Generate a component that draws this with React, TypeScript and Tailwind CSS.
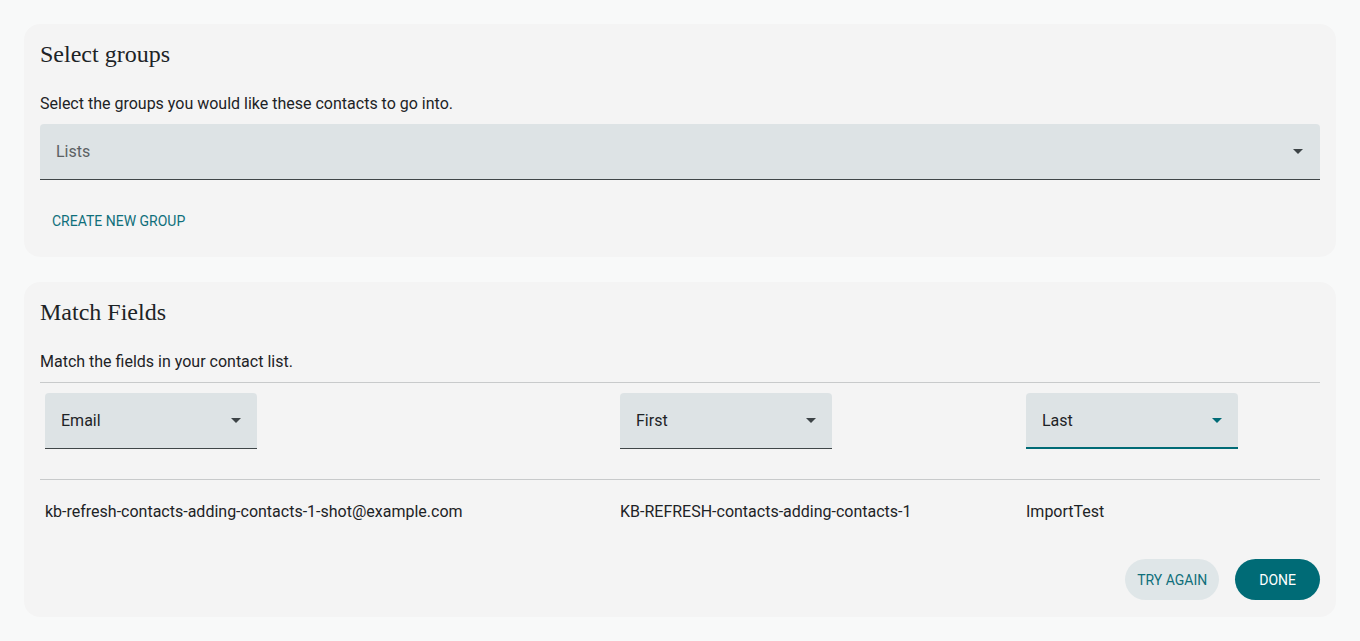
function Caret({ color = '#3d4447' }: { color?: string }) {
  return (
    <svg width="10" height="5" viewBox="0 0 10 5" fill={color}>
      <path d="M0 0l5 5 5-5z" />
    </svg>
  )
}

function FieldSelect({ label, focused = false }: { label: string; focused?: boolean }) {
  return (
    <div
      className={`flex h-14 w-[212px] items-center justify-between rounded-t bg-[#dde3e5] pl-4 pr-4 ${
        focused ? 'border-b-2 border-[#006b76] pt-px' : 'border-b border-[#3f4648]'
      }`}
    >
      <span className="text-base text-[#1d2326]">{label}</span>
      <Caret color={focused ? '#006b76' : '#3d4447'} />
    </div>
  )
}

const fields = [
  { label: 'Email', value: 'kb-refresh-contacts-adding-contacts-1-shot@example.com' },
  { label: 'First', value: 'KB-REFRESH-contacts-adding-contacts-1' },
  { label: 'Last', value: 'ImportTest', focused: true },
]

export default function App() {
  return (
    <div
      className="min-h-screen bg-[#f8f9f9] px-6 pt-6 pb-6 text-[#1d2326]"
      style={{ fontFamily: 'Roboto, "Noto Sans", sans-serif' }}
    >
      {/* Select groups */}
      <section className="rounded-2xl bg-[#f4f4f4] px-4 pt-[17px] pb-[26px]">
        <h2 className="font-['Liberation_Serif',serif] text-[24px] leading-[26px] text-[#1d2326]">
          Select groups
        </h2>
        <p className="mt-[25px] text-base leading-6">Select the groups you would like these contacts to go into.</p>
        <div className="mt-2 flex h-14 items-center justify-between rounded-t bg-[#dde3e5] border-b border-[#3f4648] pl-4 pr-[17px]">
          <span className="text-base text-[#5b6163]">Lists</span>
          <Caret />
        </div>
        <button className="mt-[31px] ml-3 block text-sm leading-5 uppercase text-[#0f6f7b]">Create new group</button>
      </section>

      {/* Match Fields */}
      <section className="mt-[25px] rounded-2xl bg-[#f4f4f4] px-4 pt-[17px] pb-[17px]">
        <h2 className="font-['Liberation_Serif',serif] text-[24px] leading-[26px] text-[#1d2326]">
          Match Fields
        </h2>
        <p className="mt-[25px] text-base leading-6">Match the fields in your contact list.</p>
        <div className="mt-2 border-t border-[#c8cacb]">
          <div className="grid grid-cols-[575px_406px_1fr] border-b border-[#c8cacb] pt-[10px] pb-[30px]">
            {fields.map((f) => (
              <div key={f.label} className="pl-[5px]">
                <FieldSelect label={f.label} focused={f.focused} />
              </div>
            ))}
          </div>
          <div className="grid grid-cols-[575px_406px_1fr] pt-[22px]">
            {fields.map((f) => (
              <div key={f.label} className="pl-[5px] text-base leading-5">
                {f.value}
              </div>
            ))}
          </div>
        </div>
        <div className="mt-[37px] flex justify-end gap-4">
          <button className="h-[41px] rounded-full bg-[#dfe6e8] px-3 text-sm uppercase text-[#0f6f7b]">
            Try again
          </button>
          <button className="h-[41px] rounded-full bg-[#006b76] px-6 text-sm uppercase text-white">
            Done
          </button>
        </div>
      </section>
    </div>
  )
}
